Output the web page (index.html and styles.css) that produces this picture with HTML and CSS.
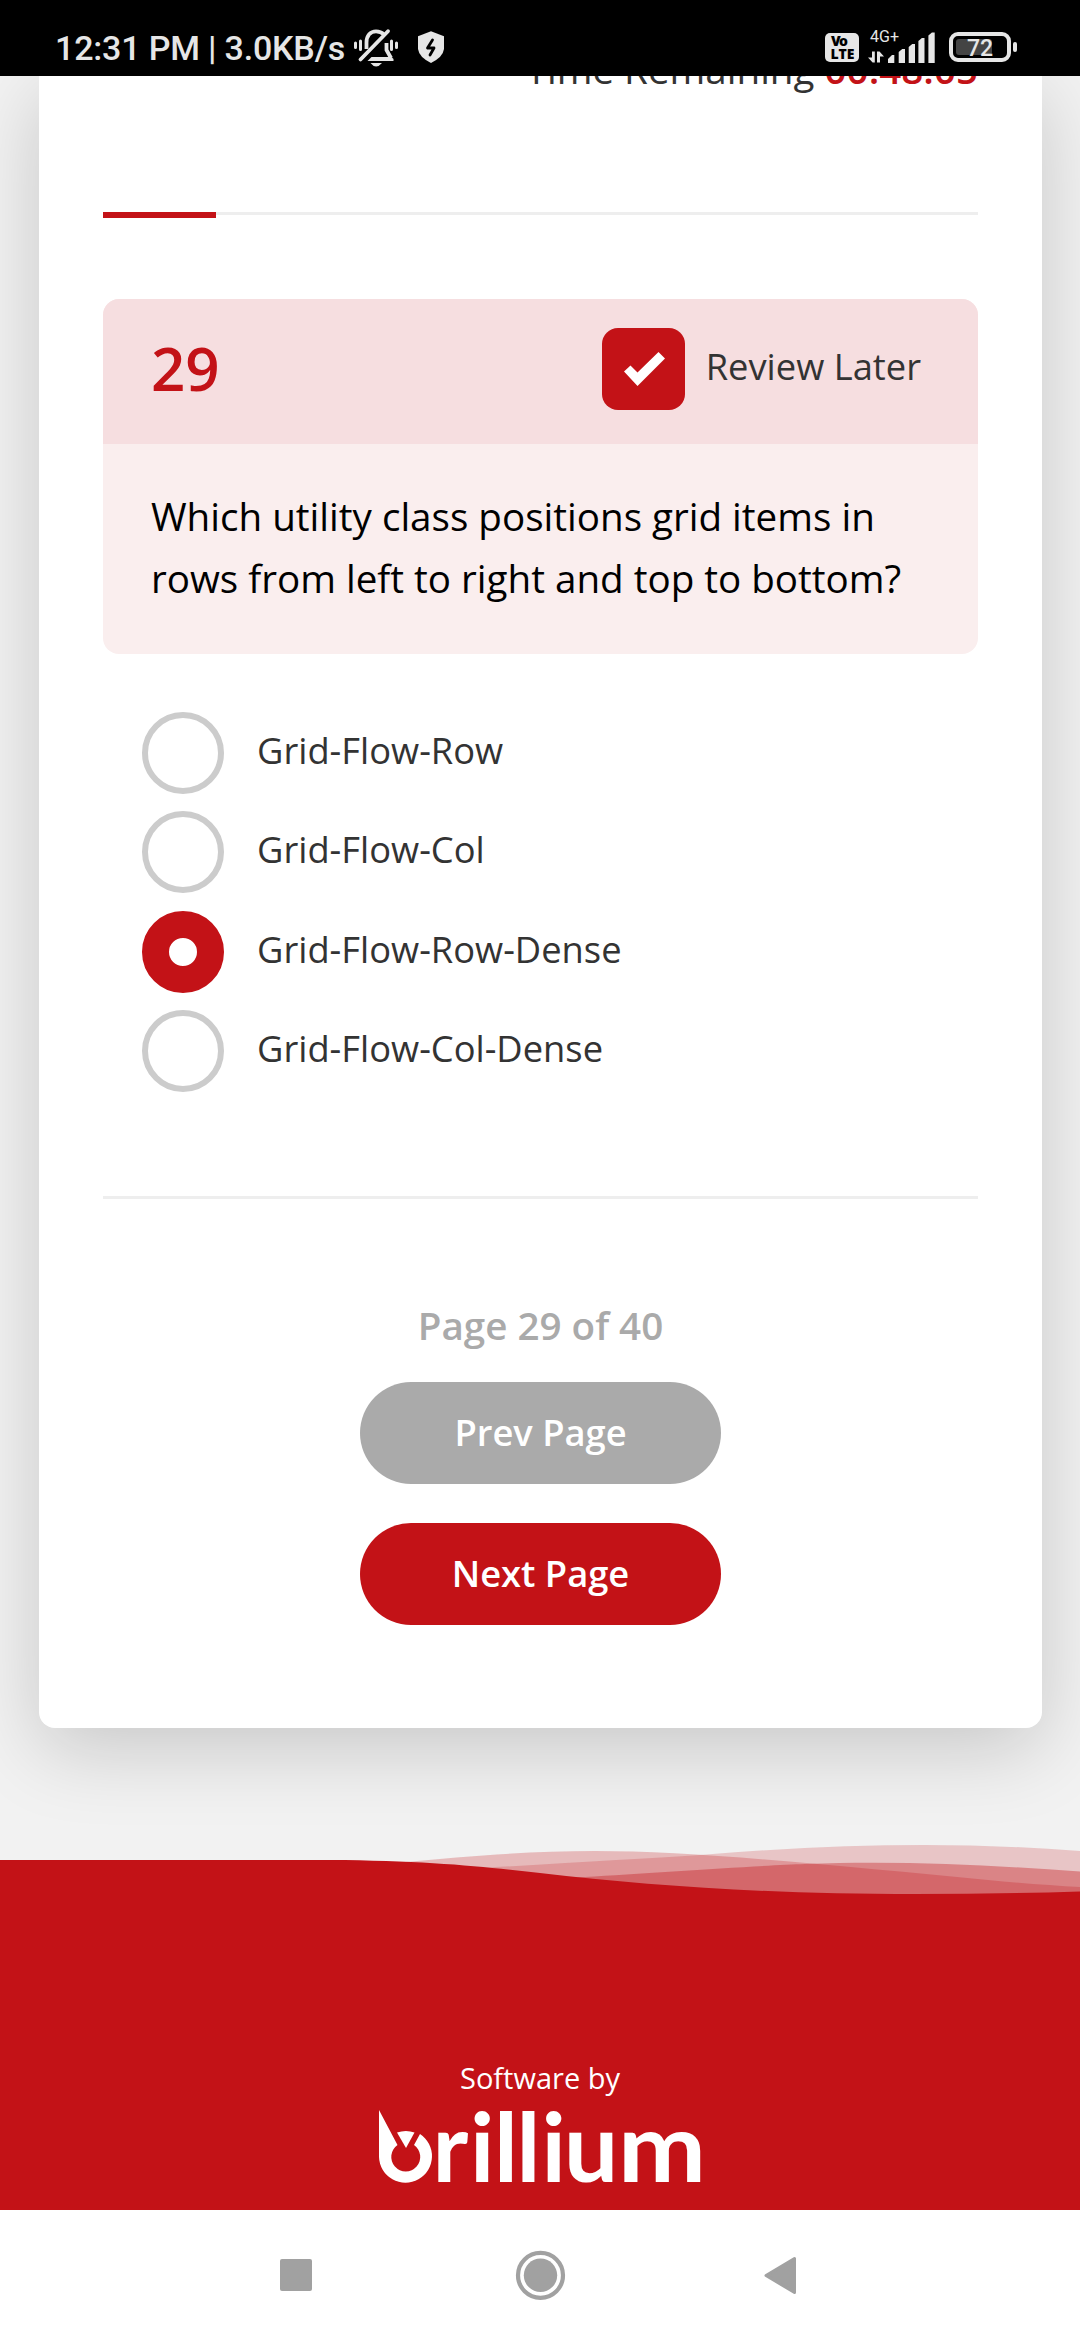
FILE: index.html
```html
<!DOCTYPE html>
<html lang="en">
<head>
<meta charset="utf-8">
<title>Assessment</title>
<link rel="stylesheet" href="styles.css">
</head>
<body>
<header class="status">
  <span class="status-text">12:31 PM | 3.0KB/s</span>
  <svg class="status-left" width="100" height="44" viewBox="350 26 100 44">
    <g fill="none" stroke="#e6e6e6" stroke-width="3" stroke-linecap="round">
      <path d="M355.500 43v4.500M360.500 41v8.500M391.500 41v8.500M396.500 43v4.500"/>
      <path d="M366.500 49V42.500C366.500 35.500 370.500 31.300 376 31.300C379.500 31.300 382 32.500 384 34.500" stroke-width="3.800" stroke-linecap="butt"/>
      <path d="M386.500 43V50L391 58" stroke-width="3.800" stroke-linecap="butt"/>
      <path d="M360.500 59.500L388 31.200" stroke-width="3.800"/>
    </g>
    <path fill="#e6e6e6" d="M367.500 61l4-4h20l2 2v2zM370.500 63h11.500q-6 7-11.500 0z"/>
    <path fill="#e6e6e6" d="M431 31.300l13 5v12.700q-1 8-13 14q-12-6-13-14V36.300z"/>
    <path fill="none" stroke="#000" stroke-width="2.800" stroke-linejoin="round" stroke-linecap="round" d="M432.500 40l-5 8h6.500l-4 7"/>
  </svg>
  <svg class="status-right" width="202" height="44" viewBox="820 26 202 44">
    <rect x="825" y="33" width="34" height="29" rx="5" fill="#e6e6e6"/>
    <text class="volte" x="831" y="46" textLength="17">Vo</text>
    <text class="volte" x="830.500" y="58.500" textLength="24">LTE</text>
    <text class="net" x="870" y="42" textLength="29">4G+</text>
    <path fill="#e6e6e6" d="M872 51.500h2.800V62.500h-2.200L868 57.500h4zM877 62.500V51.500h2.500l4.500 5h-4v6z"/>
    <path fill="#e6e6e6" d="M888 63v-4l4-4h2.300v8zM898.700 63V52l3.500-3h2.800v14zM908.700 63V47l3.500-3h2.800v19zM918.400 63V41l3.500-3h2.600v25zM928.400 63V35.500l3.500-3h2.800V63z"/>
    <rect x="951" y="34" width="58" height="26" rx="7" fill="none" stroke="#e6e6e6" stroke-width="4"/>
    <rect x="956" y="39" width="36" height="16" rx="3" fill="#444"/>
    <rect x="1013" y="42" width="4" height="10" rx="2" fill="#e6e6e6"/>
    <text class="batt" x="967" y="56" textLength="26">72</text>
  </svg>
</header>
<main class="page">
  <section class="card">
    <p class="timer"><span>Time Remaining</span> <b>00:48:05</b></p>
    <div class="progress"><div class="progress-bar"></div></div>
    <article class="question">
      <div class="question-head">
        <span class="number">29</span>
        <label class="review">
          <span class="check"><svg width="83" height="82" viewBox="0 0 83 82"><path d="M22 43.500l6.500-6 7 7L56.500 24l6.500 6.500L35.500 58z" fill="#fff"/></svg></span>
          <span class="review-label">Review Later</span>
        </label>
      </div>
      <p class="question-text">Which utility class positions grid items in<br>rows from left to right and top to bottom?</p>
    </article>
    <div class="options">
      <label class="option"><span class="radio"></span><span class="label">Grid-Flow-Row</span></label>
      <label class="option"><span class="radio"></span><span class="label">Grid-Flow-Col</span></label>
      <label class="option"><span class="radio selected"></span><span class="label">Grid-Flow-Row-Dense</span></label>
      <label class="option"><span class="radio"></span><span class="label">Grid-Flow-Col-Dense</span></label>
    </div>
    <div class="pager">
      <p class="count">Page 29 of 40</p>
      <button class="button prev">Prev Page</button>
      <button class="button next">Next Page</button>
    </div>
  </section>
</main>
<footer class="footer">
  <svg class="waves" width="1080" height="60" viewBox="0 1840 1080 60">
    <g fill="#c31217">
      <path fill-opacity=".25" d="M400 1862.500C470 1856 530 1851 595 1851C700 1851 850 1867 988 1880Q1040 1885 1080 1887V1900H400z"/>
      <path fill-opacity=".2" d="M480 1868Q620 1860 700 1855Q820 1845 925 1845Q1000 1845 1080 1851V1900H480z"/>
      <path fill-opacity=".36" d="M560 1878L585 1877C650 1873 760 1865.500 805 1864C900 1860.500 990 1865 1080 1871.500V1900H560z"/>
      <path d="M0 1860H330C430 1860.500 485 1867 540 1873C650 1886 770 1894 915 1894Q1000 1894 1080 1891.500V1901H0z"/>
    </g>
  </svg>
  <p class="by">Software by</p>
  <svg class="logo" width="330" height="80" viewBox="376 2106 330 80">
    <path fill="#fff" d="M380 2110L398.500 2145A14.500 14.500 0 1 0 415 2145L421 2134A26.500 26.500 0 1 1 380 2157z"/>
    <path fill="#fff" d="M398 2132.500q9-3 17.500 0l-8.500 15.500z"/>
    <text class="brand" y="2182" x="433.500 471 495 517.500 542.500 565 619">rilliu<tspan textLength="88" lengthAdjust="spacingAndGlyphs">m</tspan></text>
  </svg>
</footer>
<nav class="nav">
  <svg width="1080" height="130" viewBox="0 2210 1080 130" fill="#a1a1a1">
    <rect x="280" y="2259" width="32" height="32" rx="2"/>
    <circle cx="540.500" cy="2275.300" r="22.500" fill="none" stroke="#a1a1a1" stroke-width="4.200"/>
    <circle cx="540.500" cy="2275.300" r="16.700"/>
    <path d="M766 2275.500L794.500 2258.500V2292.500z" stroke="#a1a1a1" stroke-width="3" stroke-linejoin="round"/>
  </svg>
</nav>
</body>
</html>
```

FILE: styles.css
```css
* { box-sizing: border-box; }
body { margin: 0; height: 2340px; display: flex; flex-direction: column; overflow: hidden; background: #f2f2f2; font-family: "Open Sans", sans-serif; color: #333; }
p { margin: 0; }
svg { display: block; overflow: visible; }
.status { position: relative; z-index: 2; flex: none; height: 76px; padding-top: 22px; display: flex; align-items: flex-start; background: #000; color: #e6e6e6; }
.status-text { width: 295px; margin-left: 55px; font: 500 34px/52px Roboto, sans-serif; letter-spacing: -.18px; white-space: nowrap; }
.status-left { margin-top: 4px; }
.status-right { margin: 4px 0 0 370px; }
.volte { font: 800 14px "Open Sans", sans-serif; fill: #000; }
.net { font: 400 16px Roboto, sans-serif; fill: #e6e6e6; }
.batt { font: 500 23px Roboto, sans-serif; fill: #e6e6e6; }
.page { flex: none; height: 1764px; padding: 0 38px 0 39px; }
.card { height: 1652px; padding: 0 64px; background: #fff; border-radius: 0 0 16px 16px; box-shadow: 0 20px 80px rgba(0, 0, 0, .18); }
.timer { height: 136px; line-height: 52px; font-size: 38.600px; text-align: right; white-space: nowrap; }
.timer > * { position: relative; top: -33px; }
.timer b { font-weight: 600; color: #c31217; }
.progress { height: 3px; background: #eee; }
.progress-bar { width: 113px; height: 6px; background: #c31217; }
.question { margin-top: 84px; height: 355px; border-radius: 16px; overflow: hidden; background: #faeeee; }
.question-head { height: 145px; padding: 29px 57px 34px 48px; display: flex; justify-content: space-between; background: #f6dee0; }
.number { font-size: 60px; line-height: 81px; font-weight: 600; color: #c31217; }
.review { display: flex; gap: 21px; }
.check { width: 83px; height: 82px; border-radius: 16px; background: #c31217; }
.review-label { font-size: 36.300px; line-height: 76px; }
.question-text { padding: 41px 48px; font-size: 38.600px; line-height: 62px; color: #000; white-space: nowrap; }
.options { height: 545px; padding: 57.500px 39px 0; border-bottom: 3px solid #eee; }
.option { display: flex; gap: 33px; height: 99.500px; }
.radio { width: 82px; height: 82px; border: 6px solid #ccc; border-radius: 50%; }
.radio.selected { border: 27px solid #c31217; }
.label { font-size: 36.300px; line-height: 76px; }
.pager { padding-top: 95px; display: flex; flex-direction: column; align-items: center; }
.count { height: 88px; font-size: 38.600px; line-height: 62px; font-weight: 600; color: #aaa; }
.button { width: 361px; height: 102px; padding: 0 0 2px; border: 0; border-radius: 51px; font: 600 36.300px "Open Sans", sans-serif; color: #fff; }
.prev { margin-bottom: 39px; background: #aaa; }
.next { background: #c31217; }
.footer { flex: none; height: 370px; display: flex; flex-direction: column; align-items: center; background: linear-gradient(transparent 59px, #c31217 59px); }
.waves { flex: none; }
.by { margin-top: 155px; height: 51px; font-size: 29px; line-height: 46px; color: #fff; }
.brand { font: 700 96px Lato, sans-serif; fill: #fff; }
.nav { flex: none; height: 130px; background: #fff; }
```
